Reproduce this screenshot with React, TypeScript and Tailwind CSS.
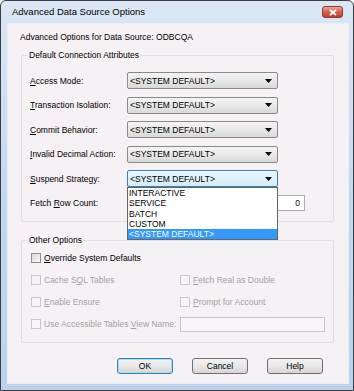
import React from "react";

const rows = [
  { pre: "", key: "A", post: "ccess Mode:" },
  { pre: "", key: "T", post: "ransaction Isolation:" },
  { pre: "", key: "C", post: "ommit Behavior:" },
  { pre: "", key: "I", post: "nvalid Decimal Action:" },
];

const listItems = ["INTERACTIVE", "SERVICE", "BATCH", "CUSTOM", "<SYSTEM DEFAULT>"];

function Arrow() {
  return (
    <svg width="7" height="4" viewBox="0 0 7 4" className="mr-[5px]">
      <path d="M0 0 H7 L3.5 4 Z" fill="#000" />
    </svg>
  );
}

function Combo({ focused }: { focused?: boolean }) {
  return (
    <div
      className={
        "flex h-[17px] w-[151px] items-center justify-between rounded-[2px] border pl-[2px] " +
        (focused
          ? "border-[#3c7fb1] bg-gradient-to-b from-[#eaf6fd] to-[#d3ecfa]"
          : "border-[#8a8a8a] bg-gradient-to-b from-[#f4f4f4] via-[#e9e9e9] to-[#d8d8d8]")
      }
    >
      <span>&lt;SYSTEM DEFAULT&gt;</span>
      <Arrow />
    </div>
  );
}

function Check({ label, disabled }: { label: React.ReactNode; disabled?: boolean }) {
  return (
    <div className={"flex h-[14px] items-center " + (disabled ? "text-[#a3a3a3]" : "text-black")}>
      <span
        className={
          "mr-[3px] h-[10px] w-[10px] border " +
          (disabled
            ? "border-[#c9c9c9] bg-[#f6f4f6]"
            : "border-[#8e8f8f] bg-gradient-to-br from-[#d8d8d8] to-[#fbfbfb]")
        }
      />
      <span>{label}</span>
    </div>
  );
}

function Btn({ children, primary }: { children: React.ReactNode; primary?: boolean }) {
  return (
    <button
      className={
        "h-[16px] w-[56px] rounded-[3px] border bg-gradient-to-b from-[#f3f3f3] via-[#e8e8e8] to-[#d6d6d6] text-black " +
        (primary ? "border-[#3c7fb1] shadow-[inset_0_0_0_1px_#a8dcf5]" : "border-[#707070]")
      }
    >
      {children}
    </button>
  );
}

export default function App() {
  return (
    <div className="h-[391px] w-[354px] font-['Liberation_Sans',Arial,sans-serif] text-[8.5px] leading-[10px] text-black">
      <div className="flex h-full flex-col rounded-t-[6px] border border-[#3a3d42] bg-gradient-to-b from-[#dbe7f5] via-[#c4d8ef] to-[#bcd2ec] pb-[6px] pl-[6px] pr-[4px]">
        {/* title bar */}
        <div className="flex h-[22px] items-center justify-between pl-[5px] pr-[6px]">
          <span className="text-[9.5px]">Advanced Data Source Options</span>
          <span className="flex h-[12px] w-[21px] items-center justify-center rounded-[3px] border border-[#8a3a31] bg-gradient-to-b from-[#e9a99e] via-[#d2604f] to-[#c2402f]">
            <svg width="8" height="7" viewBox="0 0 8 7">
              <path d="M1 1 L7 6 M7 1 L1 6" stroke="#fff" strokeWidth="1.8" />
            </svg>
          </span>
        </div>

        {/* client area */}
        <div className="flex-1 border border-[#e9eff8] bg-[#f5f1f4]">
          <div className="pl-[12px] pt-[8px]">Advanced Options for Data Source: ODBCQA</div>

          <div className="relative ml-[13px] mr-[14px] mt-[13px] h-[167px] rounded-[2px] border border-[#dcdfe5] pl-[8px] pt-[16px]">
            <span className="absolute left-[6px] top-[-6px] bg-[#f5f1f4] px-[1px]">Default Connection Attributes</span>
            <div className="flex flex-col gap-[7.5px]">
              {rows.map((r) => (
                <div key={r.post} className="flex h-[17px] items-center">
                  <span className="w-[97px]">
                    <u>{r.key}</u>
                    {r.post}
                  </span>
                  <Combo />
                </div>
              ))}
              <div className="relative flex h-[17px] items-center">
                <span className="w-[97px]">
                  <u>S</u>uspend Strategy:
                </span>
                <Combo focused />
                <div className="absolute left-[97px] top-[17px] z-10 w-[151px] border border-[#646464] bg-white">
                  {listItems.map((it, i) => (
                    <div
                      key={it}
                      className={
                        "flex h-[10.3px] items-center pl-[1px] " +
                        (i === listItems.length - 1 ? "bg-[#3399ff] text-white" : "")
                      }
                    >
                      {it}
                    </div>
                  ))}
                </div>
              </div>
              <div className="flex h-[17px] items-center">
                <span className="w-[97px]">
                  Fetch <u>R</u>ow Count:
                </span>
                <div className="flex h-[16px] w-[178px] items-center justify-end border border-[#abadb3] bg-white pr-[4px]">
                  0
                </div>
              </div>
            </div>
          </div>

          <div className="relative ml-[13px] mr-[14px] mt-[18px] h-[103px] rounded-[2px] border border-[#dcdfe5] pl-[9px] pt-[10px]">
            <span className="absolute left-[6px] top-[-6px] bg-[#f5f1f4] px-[1px]">Other Options</span>
            <Check
              label={
                <>
                  <u>O</u>verride System Defaults
                </>
              }
            />
            <div className="mt-[8px] grid grid-cols-[149px_1fr] gap-y-[8px]">
              <Check
                disabled
                label={
                  <>
                    Cache S<u>Q</u>L Tables
                  </>
                }
              />
              <Check
                disabled
                label={
                  <>
                    <u>F</u>etch Real as Double
                  </>
                }
              />
              <Check
                disabled
                label={
                  <>
                    <u>E</u>nable Ensure
                  </>
                }
              />
              <Check
                disabled
                label={
                  <>
                    <u>P</u>rompt for Account
                  </>
                }
              />
              <Check
                disabled
                label={
                  <>
                    Use Accessible Tables <u>V</u>iew Name:
                  </>
                }
              />
              <div className="h-[15px] w-[145px] border border-[#c6c6c6] bg-[#f8f6f8]" />
            </div>
          </div>

          <div className="mt-[15px] flex justify-end gap-[19px] pr-[25px]">
            <Btn primary>OK</Btn>
            <Btn>Cancel</Btn>
            <Btn>Help</Btn>
          </div>
        </div>
      </div>
    </div>
  );
}
